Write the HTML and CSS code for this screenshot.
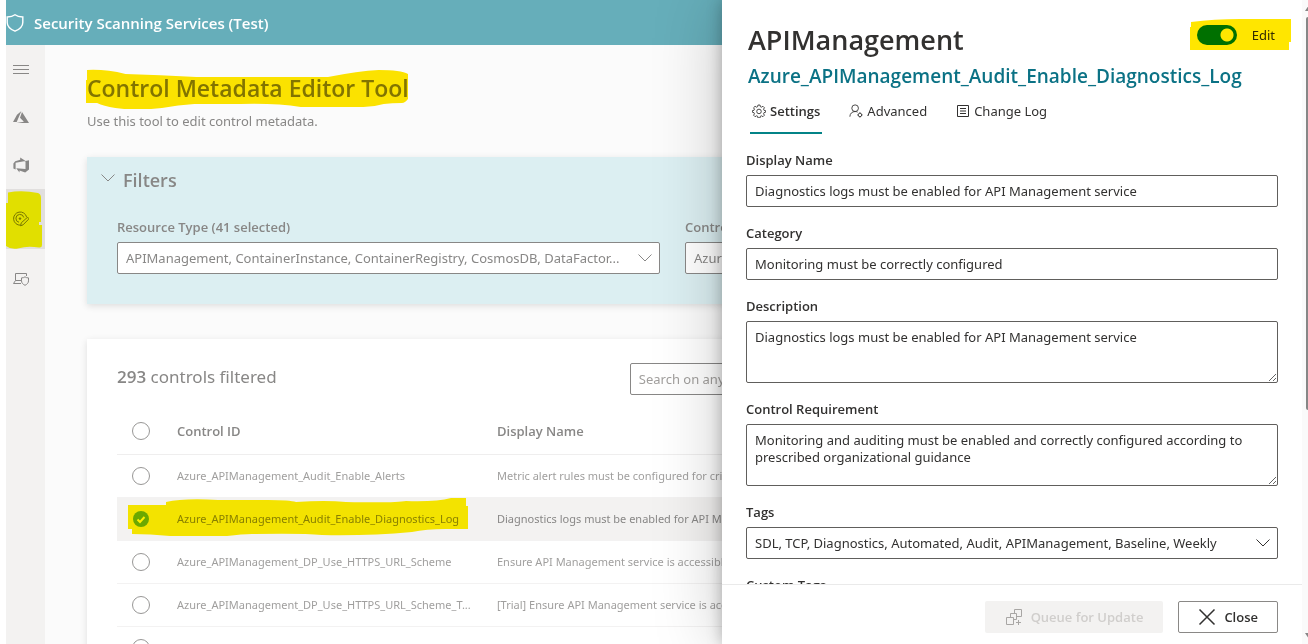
FILE: index.html
```html
<!DOCTYPE html>
<html lang="en">
<head>
<meta charset="utf-8">
<title>Security Scanning Services (Test)</title>
<link rel="stylesheet" href="styles.css">
</head>
<body>
<div class="app">
  <header class="topbar">
    <svg class="shield" viewBox="0 0 18 18" width="18" height="18"><path d="M9 .8C7 2.400 4.500 3 1.200 3V8.500c0 4 3 6.700 7.800 8.700 4.800-2 7.800-4.700 7.800-8.700V3C13.500 3 11 2.400 9 .8z"/></svg>
    <span class="brand">Security Scanning Services (Test)</span>
  </header>
  <div class="body">
    <nav class="rail" aria-label="Main">
      <button class="rail-item" aria-label="Menu"><svg viewBox="0 0 16 16"><path d="M0 4.500h16M0 8.500h16M0 12.500h16"/></svg></button>
      <button class="rail-item" aria-label="Azure"><svg class="solid" viewBox="0 0 16 16"><path d="M8.400 2L4 5.800 0 13h3.700zM9 3l-2 5.700 3.900 4.100L3.500 14H16z"/></svg></button>
      <button class="rail-item" aria-label="DevOps"><svg class="solid" viewBox="0 0 16 16"><path d="M16 3.200v9.200L12.200 15.500 6.500 13.500v2L3.200 11.300l9.300.7V4zM12.600 4L7.200.6v2.200L2.200 4.200.4 6.500v5l2.200 1V5.800z"/></svg></button>
      <button class="rail-item tall active" aria-label="Control editor">
        <svg viewBox="0 0 16 16"><path d="M7.500 14.200A6.600 6.600 0 1 1 13.600 6M6 11.300A4 4 0 1 1 10.800 6.500"/><circle cx="7" cy="7.600" r=".8" fill="currentColor"/><path d="M7.500 14.800l.8-3L14 6.700c1.200-.7 2.200.6 1.500 1.600L10 13.900z"/></svg>
        <svg class="marker marker-rail" viewBox="0 0 36 60"><path d="M2 2.500Q16 0 32 3q3 1 3 5v24h-2v3h3v20q0 3-3 2.500-12-2-20 .8Q5 60 0 56V13h2z"/></svg>
      </button>
      <button class="rail-item tall" aria-label="Device security"><svg viewBox="0 0 16 16"><path d="M8 12.500H.5l2-3V2.500h11V5M2.500 9.500H8M12 5.800c-1 .8-2 1.100-3.500 1.100v3c0 2 1.500 3.500 3.500 4.400 2-.9 3.500-2.400 3.500-4.400v-3c-1.500 0-2.500-.3-3.500-1.100z"/></svg></button>
    </nav>
    <main class="main">
      <h1 class="title">Control Metadata Editor Tool
        <svg class="marker marker-title" viewBox="0 0 320 40" preserveAspectRatio="none"><path d="M2 1Q20 0 40 5q34 1 70 3h130q30-6 50-7 22 0 29 4v25q-3 4-6 4-10 0-18 1-10 3-20 3h-62q-24-4-60-3H108q-16 1-32 4-26 3-46 0-12-2-18-5H1V11h1z"/></svg>
      </h1>
      <p class="subtitle">Use this tool to edit control metadata.</p>

      <section class="card filters">
        <h2 class="filters-title"><svg class="chev" viewBox="0 0 14 8"><path d="M.5.5L7 7 13.500.5"/></svg>Filters</h2>
        <div class="filter-grid">
          <div class="filter">
            <label class="label" for="rt">Resource Type (41 selected)</label>
            <div class="picker"><select id="rt" class="control"><option>APIManagement, ContainerInstance, ContainerRegistry, CosmosDB, DataFactor...</option></select><svg class="chev" viewBox="0 0 14 8"><path d="M.5.5L7 7 13.500.5"/></svg></div>
          </div>
          <div class="filter">
            <label class="label" for="cs">Control Source</label>
            <div class="picker"><select id="cs" class="control"><option>Azure</option></select><svg class="chev" viewBox="0 0 14 8"><path d="M.5.5L7 7 13.500.5"/></svg></div>
          </div>
        </div>
      </section>

      <section class="card results">
        <div class="results-head">
          <p class="count"><b>293</b> controls filtered</p>
          <input class="control" type="text" aria-label="Search" placeholder="Search on any field">
        </div>
        <table class="grid">
          <thead><tr><th class="pick"><input type="checkbox" aria-label="Select all"></th><th class="cid">Control ID</th><th>Display Name</th></tr></thead>
          <tbody>
            <tr><td><input type="checkbox" aria-label="Select row"></td><td>Azure_APIManagement_Audit_Enable_Alerts</td><td>Metric alert rules must be configured for critical operations</td></tr>
            <tr class="selected"><td class="anchor"><input type="checkbox" aria-label="Select row" checked><svg class="tick" viewBox="0 0 16 16"><path d="M4.500 8.500L7 11l4.500-5"/></svg>
              <svg class="marker marker-row" viewBox="0 0 340 38" preserveAspectRatio="none"><path d="M0 7h38V4Q56 0 90 2h50q22 0 28 2 30-2 50 0 50 1 60-1 30 1 45-3h15v8h2v23h-22q-20 0-34 3-44 4-90 3-20-2-70-1-12 0-32 3-24 3-50-1-20-2-38-2v-5H0z"/></svg></td><td>Azure_APIManagement_Audit_Enable_Diagnostics_Log</td><td>Diagnostics logs must be enabled for API Management service</td></tr>
            <tr><td><input type="checkbox" aria-label="Select row"></td><td>Azure_APIManagement_DP_Use_HTTPS_URL_Scheme</td><td>Ensure API Management service is accessible only over HTTPS</td></tr>
            <tr><td><input type="checkbox" aria-label="Select row"></td><td>Azure_APIManagement_DP_Use_HTTPS_URL_Scheme_T...</td><td>[Trial] Ensure API Management service is accessible only over HTTPS</td></tr>
            <tr><td><input type="checkbox" aria-label="Select row"></td><td>Azure_APIManagement_DP_Use_HTTPS_URL_Sch</td><td>[Trial] Ensure traffic for and to API Management is secured</td></tr>
          </tbody>
        </table>
      </section>
    </main>
  </div>
</div>

<aside class="panel" aria-label="Control details">
  <div class="panel-scroll">
    <div class="panel-head">
      <h2 class="panel-title">APIManagement</h2>
      <label class="toggle"><input type="checkbox" role="switch" checked><span>Edit</span>
        <svg class="marker marker-edit" viewBox="0 0 102 32" preserveAspectRatio="none"><path d="M1 3Q24 0 50 0h51v23h-2v8H0V8h1z"/></svg>
      </label>
    </div>
    <h3 class="panel-sub">Azure_APIManagement_Audit_Enable_Diagnostics_Log</h3>
    <div class="tabs" role="tablist">
      <button class="tab on" role="tab" aria-selected="true"><svg viewBox="0 0 16 16"><path d="M6.800 1.200h2.400l.4 1.900 1.300.5 1.600-1 1.700 1.700-1 1.600.5 1.300 1.900.4v1.800l-1.900.5-.5 1.300 1 1.600-1.700 1.700-1.600-1-1.300.5-.4 1.900H6.800l-.4-1.900-1.300-.5-1.600 1-1.700-1.700 1-1.600-.5-1.300L.4 9.400V7.600l1.900-.4.5-1.300-1-1.600 1.700-1.700 1.600 1 1.300-.5z"/><circle cx="8" cy="8.500" r="2.600"/></svg>Settings</button>
      <button class="tab" role="tab"><svg viewBox="0 0 16 16"><circle cx="7" cy="4.800" r="3.800"/><path d="M1 14.500c0-3.500 2.600-5.900 6-5.900 1.200 0 2 .2 2.800.7"/><circle cx="12.500" cy="12.500" r="2"/><path d="M12.500 9.500v1M12.500 14.500v1M9.500 12.500h1M14.500 12.500h1"/></svg>Advanced</button>
      <button class="tab" role="tab"><svg viewBox="0 0 14 14"><path d="M1.500 1.500h11v11h-11zM4 4.500h6M4 7h6M4 9.500h6"/></svg>Change Log</button>
    </div>
    <form class="fields">
      <div class="field"><label class="label" for="dn">Display Name</label><input class="control" id="dn" type="text" value="Diagnostics logs must be enabled for API Management service"></div>
      <div class="field"><label class="label" for="cat">Category</label><input class="control" id="cat" type="text" value="Monitoring must be correctly configured"></div>
      <div class="field"><label class="label" for="desc">Description</label><textarea class="control" id="desc">Diagnostics logs must be enabled for API Management service</textarea></div>
      <div class="field"><label class="label" for="req">Control Requirement</label><textarea class="control" id="req">Monitoring and auditing must be enabled and correctly configured according to prescribed organizational guidance</textarea></div>
      <div class="field"><label class="label" for="tags">Tags</label><div class="picker"><select class="control" id="tags"><option>SDL, TCP, Diagnostics, Automated, Audit, APIManagement, Baseline, Weekly</option></select><svg class="chev" viewBox="0 0 14 8"><path d="M.5.5L7 7 13.500.5"/></svg></div></div>
      <div class="field"><label class="label" for="ctags">Custom Tags</label><input class="control" id="ctags" type="text"></div>
    </form>
  </div>
  <footer class="panel-foot">
    <button class="btn" disabled><svg viewBox="0 0 18 18"><path d="M1.500 9.500h7v7h-7zM5.500 9.500v-4h6v6h-3M9.500 5.500v-4h7v7h-5M13.500 12v5M11 14.500h5"/></svg>Queue for Update</button>
    <button class="btn close"><svg viewBox="0 0 18 18"><path d="M1.500 1.500l15 15M16.500 1.500l-15 15"/></svg>Close</button>
  </footer>
  <div class="scrollbar"><i class="arrow up"></i><i class="thumb"></i><i class="arrow down"></i></div>
</aside>
</body>
</html>
```
FILE: styles.css
```css
* { box-sizing: border-box; }
html, body { height: 100%; margin: 0; }
body { position: relative; overflow: hidden; background: #fff; color: #323130; font: 13px/20px "Noto Sans", "Open Sans", sans-serif; }
h1, h2, h3, p { margin: 0; font-weight: 600; }
h1, h2, h3, th, b, .brand, .label, .tab.on, .btn { font-family: "Open Sans", "Noto Sans", sans-serif; }
button, input, select, textarea { font: inherit; color: inherit; }
button { background: none; border: 0; padding: 0; }
svg { fill: none; stroke: currentColor; display: block; flex: none; }
svg.solid { fill: currentColor; stroke: none; }

.app { height: 100%; padding-left: 6px; display: flex; flex-direction: column; overflow: hidden; color: #888786; }
.topbar { flex: none; height: 45px; display: flex; align-items: center; gap: 10px; background: #66aeba; color: #fff; }
.shield { stroke-width: 1.4; }
.brand { font-size: 15px; font-weight: 600; }
.body { flex: 1; min-height: 0; display: flex; overflow: hidden; background: #fbfbfb; }
.rail { width: 39px; background: #f3f2f1; display: flex; flex-direction: column; }
.rail-item { position: relative; height: 48px; padding-left: 7px; display: flex; align-items: center; }
.rail-item svg { width: 16px; height: 16px; }
.rail-item.tall { height: 60px; }
.rail-item.active { background: #e1dfde; color: #777675; }

svg.marker { position: absolute; fill: #ffe600; stroke: none; mix-blend-mode: multiply; pointer-events: none; }
.rail-item svg.marker-rail { left: 0; top: 1px; width: 36px; height: 60px; fill: #ff0; }
svg.marker-title { left: -2px; top: -3px; width: 324px; height: 40px; }
svg.marker-row { left: 11px; top: 0; width: 340px; height: 38px; fill: #fff000; }
svg.marker-edit { left: -7px; top: -6px; width: 102px; height: 32px; }

.main { flex: 1; min-width: 0; padding: 27px 50px 0 42px; }
.title { position: relative; width: fit-content; font-size: 23px; line-height: 32px; white-space: nowrap; color: #82817f; }
.subtitle { margin-top: 7px; font-weight: 400; }
.card { padding: 0 30px; box-shadow: 0 2px 7px rgba(0, 0, 0, .12); }
.filters { margin-top: 26px; padding: 11px 30px 30px; background: #dceff2; }
.filters-title { display: flex; align-items: center; gap: 8px; margin-left: -16px; font-size: 18px; line-height: 24px; }
.chev { width: 14px; height: 8px; }
.filters-title .chev { margin-bottom: 4px; }
.filter-grid { display: grid; grid-template-columns: 1fr 1fr; gap: 25px; margin-top: 25px; }
.label { display: block; font-weight: 600; margin-bottom: 5px; }
.picker { position: relative; }
.picker .chev { position: absolute; right: 8px; top: 12px; width: 14px; pointer-events: none; }
.control { display: block; width: 100%; height: 32px; padding: 0 8px; border: 1px solid currentColor; border-radius: 2px; background: #fff; appearance: none; outline: 0; }
.control::placeholder { color: #a19f9d; }
select.control { padding-right: 28px; text-overflow: ellipsis; }
.results { margin-top: 35px; padding: 24px 30px 0; background: #fff; }
.results-head { display: grid; grid-template-columns: 6fr 7fr; }
.count { font-size: 17px; line-height: 28px; font-weight: 400; }
.count b { font-weight: 600; }

.grid { width: 100%; margin-top: 14px; table-layout: fixed; border-collapse: collapse; text-align: left; }
.grid th { height: 45px; padding: 0; border-bottom: 1px solid #efeeee; font-weight: 600; }
.grid td { height: 43px; padding: 0 20px 0 0; border-bottom: 1px solid #f3f2f2; color: #a09f9e; font-size: 11px; white-space: nowrap; overflow: hidden; text-overflow: ellipsis; }
.grid td:nth-child(2) { padding-right: 8px; }
.grid .pick { width: 60px; }
.grid .cid { width: 320px; }
.grid input { display: block; appearance: none; width: 18px; height: 18px; margin: 0 0 0 15px; border: 1px solid #989796; border-radius: 50%; }
.grid .selected { background: #f3f2f1; }
.grid .selected td { color: #888786; }
.grid td.anchor { position: relative; overflow: visible; }
.grid .selected input { width: 16px; height: 16px; margin-left: 16px; border: 0; background: #6bb36b; }
.tick { position: absolute; left: 16px; top: 13px; width: 16px; height: 16px; stroke: #fff; stroke-width: 2; }

.panel { position: absolute; inset: 0 0 0 auto; width: 586px; display: flex; flex-direction: column; background: #fff; box-shadow: 0 0 64px rgba(0, 0, 0, .22), 0 0 14px rgba(0, 0, 0, .26); }
.panel-scroll { flex: 1; min-height: 0; overflow: hidden; padding: 22px 30px 0 24px; }
.panel-head { display: flex; justify-content: space-between; align-items: flex-start; padding: 0 3px 0 2px; }
.panel-title { font-size: 27px; line-height: 36px; }
.toggle { position: relative; display: flex; align-items: center; gap: 15px; margin-top: 3px; }
.toggle input { appearance: none; width: 40px; height: 20px; margin: 0; border-radius: 10px; background: radial-gradient(circle at 30px 10px, #fff 6px, #007c00 7px); }
.panel-sub { padding-left: 2px; margin-top: 5px; font-size: 19px; line-height: 26px; color: #0b7285; }
.tabs { display: flex; gap: 25px; margin-top: 6px; padding-left: 4px; }
.tab { display: flex; align-items: center; gap: 4px; height: 39px; padding: 0 2px 5px; border-bottom: 2px solid transparent; }
.tab svg { width: 14px; height: 14px; }
.tab.on { font-weight: 600; border-color: #038387; }
.fields { display: grid; gap: 16px; margin-top: 16px; }
.fields .control { border-color: #605e5c; }
textarea.control { height: 62px; padding: 7px 8px; line-height: 17px; resize: vertical; }
.panel-foot { display: flex; justify-content: flex-end; gap: 15px; padding: 16px 30px 11px; border-top: 1px solid #eaeaea; background: #fff; }
.btn { display: flex; align-items: center; gap: 8px; height: 32px; padding: 0 20px; border-radius: 2px; font-weight: 600; }
.btn svg { width: 18px; height: 18px; }
.btn:disabled { background: #f3f2f1; color: #d0cecc; }
.btn:disabled svg { color: #a8a6a4; }
.btn.close { border: 1px solid #8a8886; padding: 0 19px; }
.btn.close svg { stroke-width: 1.5; }
.scrollbar { position: absolute; inset: 0 0 0 auto; width: 6px; padding: 5px 0; background: #fafafa; overflow: hidden; display: flex; flex-direction: column; }
.thumb { flex: 0 0 62%; margin: 6px 0 0 4px; background: #868686; border-radius: 2px 0 0 2px; }
.arrow { margin-left: 3px; border: 4px solid transparent; height: 6px; border-top-width: 0; border-bottom: 6px solid #868686; }
.arrow.down { margin-top: auto; border-bottom-width: 0; border-top: 6px solid #868686; }
```
